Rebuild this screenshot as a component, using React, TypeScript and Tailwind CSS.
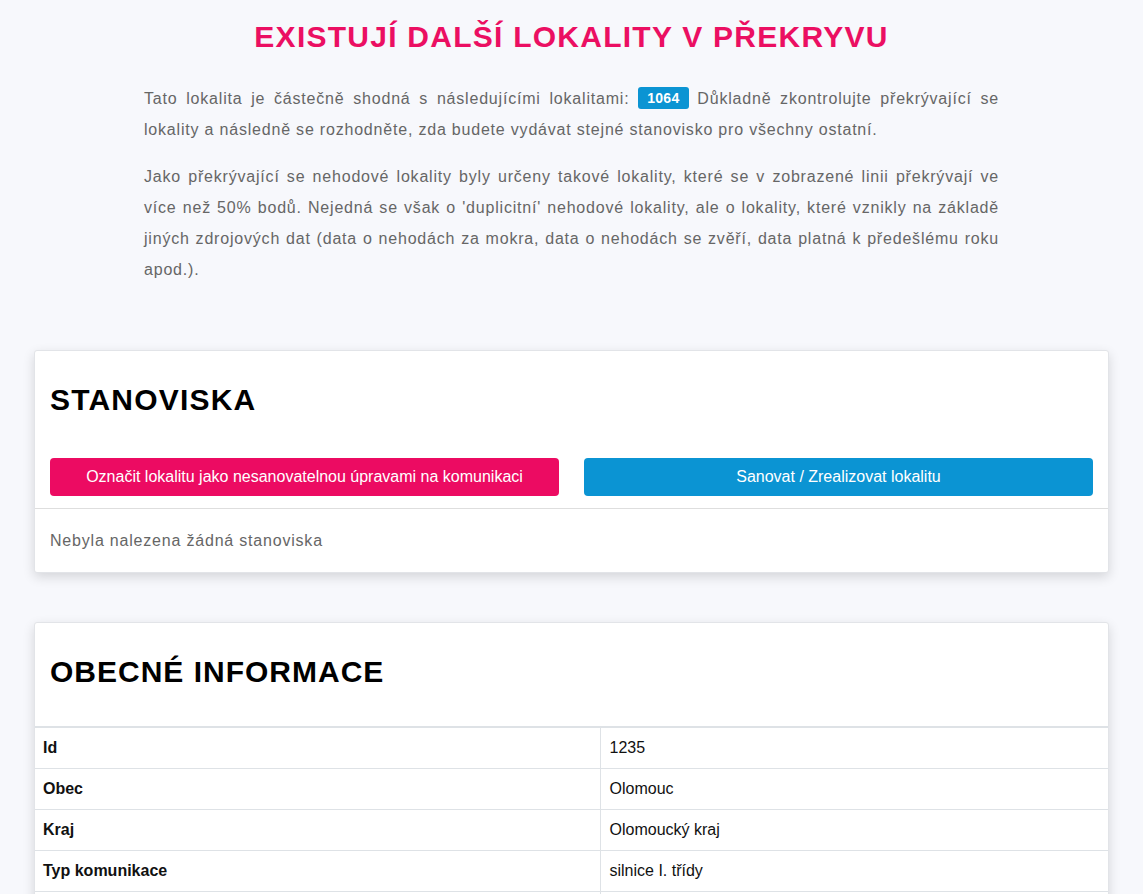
import React from "react";

const rows: [string, string][] = [
  ["Id", "1235"],
  ["Obec", "Olomouc"],
  ["Kraj", "Olomoucký kraj"],
  ["Typ komunikace", "silnice I. třídy"],
  ["Číslo komunikace", "35"],
];

export default function App() {
  return (
    <div
      className="min-h-[894px] bg-[#f7f8fc] pb-10"
      style={{ fontFamily: '"Liberation Sans", Arial, sans-serif' }}
    >
      <h1 className="pt-[19px] text-center text-[30px] font-bold leading-[36px] tracking-[1.25px] text-[#eb0f62]">
        EXISTUJÍ DALŠÍ LOKALITY V PŘEKRYVU
      </h1>
      <div className="mx-auto mt-[28px] w-[855px] text-justify text-[16px] leading-[31px] tracking-[0.05em] text-[#666]">
        <p className="mb-[16px]">
          Tato lokalita je částečně shodná s následujícími lokalitami:{" "}
          <span className="inline-block rounded-[3px] bg-[#0b94d3] px-[9px] text-[14px] font-bold leading-[22px] tracking-[0.3px] text-white align-[1px]">
            1064
          </span>{" "}
          Důkladně zkontrolujte překrývající se lokality a následně se rozhodněte, zda budete vydávat stejné stanovisko pro všechny ostatní.
        </p>
        <p>
          Jako překrývající se nehodové lokality byly určeny takové lokality, které se v zobrazené linii překrývají ve více než 50% bodů. Nejedná se však o 'duplicitní' nehodové lokality, ale o lokality, které vznikly na základě jiných zdrojových dat (data o nehodách za mokra, data o nehodách se zvěří, data platná k předešlému roku apod.).
        </p>
      </div>

      <div className="mx-[34px] mt-[65px] rounded-[3px] border border-[#e2e4e8] bg-white shadow-[0_4px_12px_rgba(0,0,0,0.14)]">
        <h2 className="px-[15px] pt-[31px] text-[30px] font-bold leading-[36px] tracking-[1.2px] text-black">
          STANOVISKA
        </h2>
        <div className="mt-[40px] grid grid-cols-2 gap-[25px] px-[15px]">
          <button className="h-[38px] rounded-[4px] bg-[#ec0b62] text-[16px] text-white">
            Označit lokalitu jako nesanovatelnou úpravami na komunikaci
          </button>
          <button className="h-[38px] rounded-[4px] bg-[#0b94d3] text-[16px] text-white">
            Sanovat / Zrealizovat lokalitu
          </button>
        </div>
        <div className="mt-[12px] border-t border-[#dedede] px-[15px] pt-[20px] pb-[19px] text-[16px] leading-[24px] tracking-[0.05em] text-[#666]">
          Nebyla nalezena žádná stanoviska
        </div>
      </div>

      <div className="mx-[34px] mt-[49px] rounded-[3px] border border-[#e2e4e8] bg-white shadow-[0_4px_12px_rgba(0,0,0,0.14)]">
        <h2 className="px-[15px] pt-[31px] pb-[36px] text-[30px] font-bold leading-[36px] tracking-[1px] text-black">
          OBECNÉ INFORMACE
        </h2>
        <table className="w-full border-collapse text-[16px] leading-[24px] text-[#111]">
          <tbody>
            {rows.map(([k, v], i) => (
              <tr
                key={k}
                className={i === 0 ? "border-t-2 border-[#dee2e6]" : "border-t border-[#dee2e6]"}
              >
                <td className="w-[565px] border-r border-[#dee2e6] px-[8px] py-[8px] font-bold">
                  {k}
                </td>
                <td className="px-[9px] py-[8px]">{v}</td>
              </tr>
            ))}
          </tbody>
        </table>
      </div>
    </div>
  );
}
